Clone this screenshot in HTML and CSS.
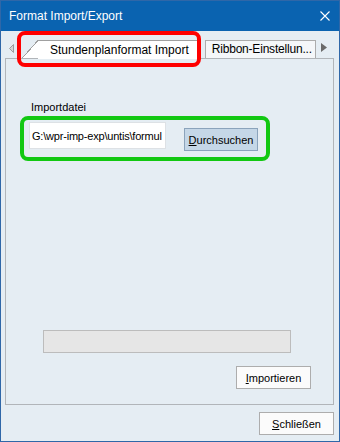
FILE: index.html
```html
<!DOCTYPE html>
<html lang="de">
<head>
  <meta charset="UTF-8">
  <title>Format Import/Export</title>
  <link rel="stylesheet" href="styles.css">
</head>
<body>

<div class="window">
  <div class="titlebar">
    <span class="title">Format Import/Export</span>
    <svg class="close" width="10" height="10" viewBox="0 0 10 10">
      <path d="M0.5 0.5 L9.5 9.5 M9.5 0.5 L0.5 9.5" stroke="#fff" stroke-width="1.1" fill="none"/>
    </svg>
  </div>

  <div class="client">
    <div class="tabstrip">
      <svg class="arrow arrow-left" width="5" height="9" viewBox="0 0 5 9">
        <polygon points="4.5,0.5 0.5,4.5 4.5,8.5" fill="#d4d6d8" stroke="#9c9c9c" stroke-width="1"/>
      </svg>
      <div class="tab active">
        <span class="slant"></span>
        <span class="face">Stundenplanformat Import</span>
      </div>
      <div class="tab">Ribbon-Einstellun...</div>
      <svg class="arrow arrow-right" width="6" height="9" viewBox="0 0 6 9">
        <polygon points="0,0 6,4.5 0,9" fill="#6a6a6a"/>
      </svg>
    </div>

    <div class="panel">
      <label class="field-label">Importdatei</label>
      <div class="file-row">
        <input type="text" class="file-input" value="G:\wpr-imp-exp\untis\formul">
        <button class="btn btn-browse"><u>D</u>urchsuchen</button>
      </div>
      <div class="progress"></div>
      <div class="actions">
        <button class="btn"><u>I</u>mportieren</button>
      </div>
    </div>

    <div class="footer">
      <button class="btn"><u>S</u>chließen</button>
    </div>
  </div>

  <!-- annotation round the active tab -->
  <div class="mark-tab"></div>
</div>

</body>
</html>
```

FILE: styles.css
```css
* { box-sizing: border-box; margin: 0; padding: 0; }
html, body {
  background: #ffffff;
}
.window {
  position: relative;
  width: 340px;
  height: 442px;
  border: 1px solid #2f67a8;
  display: flex;
  flex-direction: column;
  background: #e5edf3;
  font-family: "Liberation Sans", Arial, sans-serif;
  color: #000;
}
.titlebar {
  height: 30px;
  flex: none;
  background: #0a63b0;
  color: #fff;
  display: flex;
  align-items: center;
  justify-content: space-between;
  padding: 0 9px 0 8px;
  font-size: 12px;
}
.client {
  flex: 1;
  display: flex;
  flex-direction: column;
  padding: 0 5px 0 4px;
}
.tabstrip {
  height: 27px;
  flex: none;
  display: flex;
  align-items: flex-end;
  font-size: 12px;
}
.arrow-left {
  margin: 0 8px 5px 4px;
}
.arrow-right {
  margin: 0 0 6px 5px;
}
.tab {
  width: 111px;
  height: 18px;
  line-height: 17px;
  padding: 0 0 0 6px;
  border: 1px solid #acacac;
  border-bottom: none;
  background: #f5f7f9;
  margin-left: 5px;
  white-space: nowrap;
  overflow: hidden;
  letter-spacing: -0.2px;
}
.tab.active {
  width: auto;
  display: flex;
  padding: 0;
  border: none;
  background: none;
  margin-left: 0;
  overflow: visible;
  letter-spacing: 0;
  position: relative;
  z-index: 1;
}
.slant {
  width: 16px;
  height: 18px;
  background: linear-gradient(to bottom right, #e5edf3 49%, #a0a0a0 49%, #a0a0a0 53%, #ffffff 53%);
}
.face {
  height: 19px;
  line-height: 18px;
  background: #ffffff;
  border-top: 1px solid #a0a0a0;
  border-right: 1px solid #a0a0a0;
  padding: 0 10px 0 12px;
}
.panel {
  flex: 1;
  display: flex;
  flex-direction: column;
  align-items: flex-start;
  border: 1px solid #b1b5b9;
  padding-top: 42px;
  font-size: 11px;
}
.field-label {
  line-height: 13px;
  margin-left: 25px;
}
.file-row {
  display: flex;
  align-items: flex-start;
  width: 250px;
  height: 45px;
  margin: 2px 0 0 14px;
  padding: 2px 0 0 5px;
  border: 4px solid #12c812;
  border-radius: 8px;
}
.file-input {
  width: 137px;
  height: 27px;
  border: 1px solid #dde1e5;
  background: #fff;
  padding: 0 2px;
  font-family: inherit;
  font-size: 11px;
  letter-spacing: -0.2px;
  color: #000;
  outline: none;
}
.btn {
  width: 75px;
  height: 23px;
  border: 1px solid #adadad;
  background: #fbfbfb;
  font-family: inherit;
  font-size: 11px;
  color: #000;
}
.btn-browse {
  width: 74px;
  margin: 6px 0 0 18px;
  background: #c5d7e7;
  border-color: #8ba3bb;
}
.progress {
  width: 248px;
  height: 23px;
  margin: 169px 0 0 37px;
  background: #e6e6e6;
  border: 1px solid #bcbcbc;
}
.actions {
  align-self: stretch;
  display: flex;
  justify-content: flex-end;
  margin: 13px 22px 0 0;
}
.footer {
  flex: none;
  display: flex;
  justify-content: flex-end;
  padding: 7px 0 6px;
}
.mark-tab {
  position: absolute;
  left: 16px;
  top: 30px;
  width: 184px;
  height: 36px;
  border: 4px solid #ff0000;
  border-radius: 8px;
  z-index: 2;
}
```
